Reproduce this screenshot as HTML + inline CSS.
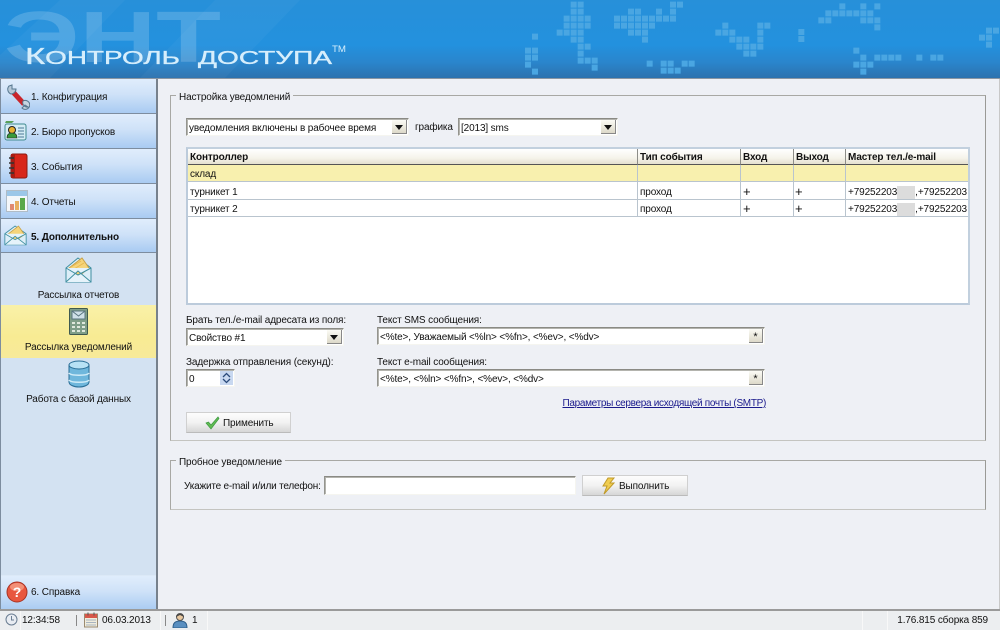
<!DOCTYPE html>
<html lang="ru"><head><meta charset="utf-8"><title>Контроль доступа</title>
<style>
html,body{margin:0;padding:0}
body{width:1000px;height:630px;position:relative;overflow:hidden;background:#eef0f5;font:10px/13px "Liberation Sans","DejaVu Sans",sans-serif;letter-spacing:-.13px;color:#111}
.a,.t{position:absolute}
.t{white-space:nowrap}
.nav{position:absolute;left:1px;width:155px;height:34px;background:linear-gradient(#e0edfc,#cfe2f8 45%,#a9cbf2);border-bottom:1px solid #7d8d9f}
.nav span{position:absolute;left:30px;top:12px;white-space:nowrap}
.nav svg{position:absolute}
.field{position:absolute;background:#fff;border-top:1px solid #8a8a84;border-left:1px solid #94948e;border-right:1px solid #f5f5f0;border-bottom:1px solid #f5f5f0;box-shadow:inset 1px 1px 0 #b4b4ae;box-sizing:border-box;white-space:nowrap;padding:2px 0 0 2px}
.dd{position:absolute;width:15px;top:1px;bottom:1px;right:1px;background:linear-gradient(#fbfbf5,#ddd9c9);border-right:1px solid #888;border-bottom:1px solid #888;box-sizing:border-box}
.dd:after{content:"";position:absolute;left:3px;top:5px;border:4px solid transparent;border-top:5px solid #111;border-bottom:0}
.star{position:absolute;width:14px;top:1px;bottom:1px;right:1px;background:linear-gradient(#fbfbf5,#ddd9c9);border-right:1px solid #888;border-bottom:1px solid #888;box-sizing:border-box;text-align:center;padding-top:2px;font-size:11px}
.group{position:absolute;border:1px solid #a8a8a4;border-right-color:#9a9a96;border-bottom-color:#c4c4c0;box-sizing:border-box}
.legend{position:absolute;background:#eef0f5;padding:0 3px;white-space:nowrap}
.btn{position:absolute;box-sizing:border-box;background:linear-gradient(#fdfdfd,#f2f2f2 50%,#d6d6d6);border:1px solid #d0d0d0;border-bottom-color:#bbb}
.btn span{position:absolute;white-space:nowrap;top:4px}
.cell{position:absolute;overflow:hidden;white-space:nowrap;box-sizing:border-box;padding-left:2px}
.h{font-weight:bold;height:16px;background:linear-gradient(#fff,#f5f3ea 60%,#e4e0d0);border-bottom:1px solid #555;border-right:1px solid #8d8d88;padding-top:2px}
.r{border-bottom:1px solid #b9c4ce;border-right:1px solid #b9c4ce;padding-top:3px}
.y{background:#f8f0ae}
.p{font-size:13px}
.blur{display:inline-block;width:18px;height:13px;background:#dcdcdc;vertical-align:top}
</style></head><body>

<!-- header -->
<div class="a" style="left:0;top:0;width:1000px;height:78px;background:linear-gradient(#2790d9,#2391de 58%,#2a85cc 80%,#2c72ae);overflow:hidden">
<svg class="a" style="left:0;top:0" width="1000" height="78" viewBox="0 0 1000 78">
<path d="M0 78 L0 55 L60 0 L125 0 L50 78Z M140 78 L215 0 L300 0 L225 78Z" fill="#fff" opacity=".035"/>
<text x="4" y="62" font-family="Liberation Sans" font-weight="bold" font-size="72" fill="#fff" opacity=".17" textLength="217" lengthAdjust="spacingAndGlyphs" letter-spacing="0">ЭНТ</text>
<text x="25" y="64" font-family="Liberation Sans" fill="#d6eefc" stroke="#d6eefc" stroke-width=".35" textLength="155" lengthAdjust="spacingAndGlyphs" font-size="23" letter-spacing="0">К<tspan font-size="18.500">ОНТРОЛЬ</tspan></text>
<text x="198" y="64" font-family="Liberation Sans" fill="#d6eefc" stroke="#d6eefc" stroke-width=".35" textLength="134" lengthAdjust="spacingAndGlyphs" font-size="18.500" letter-spacing="0">ДОСТУПА</text>
<text x="332" y="52" font-family="Liberation Sans" fill="#d6eefc" font-size="9" textLength="14" lengthAdjust="spacingAndGlyphs" letter-spacing="0">TM</text>
</svg>
<svg class="a" style="left:500px;top:0" width="500" height="78" viewBox="0 0 1500 234"><path fill="#4aa6e2" d="M212 5h18v18h-18zM233 5h18v18h-18zM212 26h18v18h-18zM233 26h18v18h-18zM191 47h18v18h-18zM212 47h18v18h-18zM233 47h18v18h-18zM254 47h18v18h-18zM191 68h18v18h-18zM212 68h18v18h-18zM233 68h18v18h-18zM254 68h18v18h-18zM170 89h18v18h-18zM191 89h18v18h-18zM212 89h18v18h-18zM233 89h18v18h-18zM212 110h18v18h-18zM233 110h18v18h-18zM233 131h18v18h-18zM254 131h18v18h-18zM233 152h18v18h-18zM233 173h18v18h-18zM254 173h18v18h-18zM275 173h18v18h-18zM275 194h18v18h-18zM96 101h18v18h-18zM75 143h18v18h-18zM96 143h18v18h-18zM75 164h18v18h-18zM96 164h18v18h-18zM75 185h18v18h-18zM96 206h18v18h-18zM510 5h18v18h-18zM531 5h18v18h-18zM384 26h18v18h-18zM405 26h18v18h-18zM468 26h18v18h-18zM510 26h18v18h-18zM342 47h18v18h-18zM363 47h18v18h-18zM384 47h18v18h-18zM405 47h18v18h-18zM426 47h18v18h-18zM447 47h18v18h-18zM468 47h18v18h-18zM489 47h18v18h-18zM510 47h18v18h-18zM342 68h18v18h-18zM363 68h18v18h-18zM384 68h18v18h-18zM405 68h18v18h-18zM426 68h18v18h-18zM447 68h18v18h-18zM384 89h18v18h-18zM405 89h18v18h-18zM426 89h18v18h-18zM426 110h18v18h-18zM667 68h18v18h-18zM772 68h18v18h-18zM793 68h18v18h-18zM646 89h18v18h-18zM667 89h18v18h-18zM688 89h18v18h-18zM772 89h18v18h-18zM688 110h18v18h-18zM709 110h18v18h-18zM730 110h18v18h-18zM772 110h18v18h-18zM709 131h18v18h-18zM730 131h18v18h-18zM751 131h18v18h-18zM772 131h18v18h-18zM730 152h18v18h-18zM751 152h18v18h-18zM895 87h18v18h-18zM895 108h18v18h-18zM1018 10h18v18h-18zM1081 10h18v18h-18zM1123 10h18v18h-18zM976 31h18v18h-18zM997 31h18v18h-18zM1018 31h18v18h-18zM1039 31h18v18h-18zM1060 31h18v18h-18zM1081 31h18v18h-18zM1102 31h18v18h-18zM955 52h18v18h-18zM976 52h18v18h-18zM1081 52h18v18h-18zM1102 52h18v18h-18zM1123 52h18v18h-18zM1123 73h18v18h-18zM1060 143h18v18h-18zM1081 164h18v18h-18zM1123 164h18v18h-18zM1144 164h18v18h-18zM1165 164h18v18h-18zM1186 164h18v18h-18zM1249 164h18v18h-18zM1291 164h18v18h-18zM1312 164h18v18h-18zM1060 185h18v18h-18zM1081 185h18v18h-18zM1102 185h18v18h-18zM1081 206h18v18h-18zM440 182h18v18h-18zM482 182h18v18h-18zM503 182h18v18h-18zM545 182h18v18h-18zM566 182h18v18h-18zM482 203h18v18h-18zM503 203h18v18h-18zM524 203h18v18h-18zM1458 83h18v18h-18zM1479 83h18v18h-18zM1437 104h18v18h-18zM1458 104h18v18h-18zM1458 125h18v18h-18z"/></svg>
</div>
<div class="a" style="left:0;top:78px;width:1000px;height:1px;background:#8b96a2"></div>

<!-- sidebar -->
<div class="a" style="left:0;top:79px;width:158px;height:531px;background:#d3e2f2;border-left:1px solid #7d8d9f;border-right:2px solid #77818c;box-sizing:border-box"></div>

<div class="nav" style="top:79px"><span>1. Конфигурация</span>
<svg style="left:5px;top:5px" width="24" height="26" viewBox="0 0 24 26"><path d="M7 8L18 20" stroke="#c9252b" stroke-width="5"/><path d="M3 2A5 5 0 0 0 5 10A5 5 0 0 0 10 5L6 5L6 1Z" fill="#b7c9d8" stroke="#56778f"/><path d="M17 17A4.500 4.500 0 1 1 16 24L19 21L22 23A4.500 4.500 0 0 1 17 17Z" fill="#c6d6e3" stroke="#56778f"/></svg></div>

<div class="nav" style="top:114px"><span>2. Бюро пропусков</span>
<svg style="left:3px;top:6px" width="23" height="22" viewBox="0 0 23 22"><path d="M1 3h7l2-2H2z" fill="#5aa05a"/><rect x="1" y="4" width="21" height="16" rx="2" fill="#d4ecf4" stroke="#3f8a8f"/><circle cx="8" cy="10" r="3.500" fill="#e8b030" stroke="#222"/><path d="M3 18c0-4 2-5 5-5s5 1 5 5z" fill="#3a9a3a" stroke="#222" stroke-width=".6"/><path d="M14 8h6M14 11h6M14 14h6M14 17h6" stroke="#7a9fb5" stroke-width="1.500"/></svg></div>

<div class="nav" style="top:149px"><span>3. События</span>
<svg style="left:7px;top:3px" width="20" height="28" viewBox="0 0 20 28"><rect x="3" y="2" width="16" height="24" rx="2" fill="#d8261a" stroke="#8a1a12"/><rect x="3" y="2" width="4" height="24" fill="#a81c12"/><path d="M1 6h5M1 11h5M1 16h5M1 21h5" stroke="#333" stroke-width="1.500"/></svg></div>

<div class="nav" style="top:184px"><span>4. Отчеты</span>
<svg style="left:5px;top:6px" width="22" height="22" viewBox="0 0 22 22"><rect x=".5" y=".5" width="21" height="21" fill="#f4f7fa" stroke="#b0bcc6"/><rect x="1" y="1" width="20" height="5" fill="#9cc7e8"/><rect x="4" y="14" width="4" height="6" fill="#e08a70"/><rect x="9" y="11" width="4" height="9" fill="#e8b060"/><rect x="14" y="8" width="5" height="12" fill="#5aa84a"/></svg></div>

<div class="nav" style="top:219px;font-weight:bold;height:33px"><span>5. Дополнительно</span>
<svg style="left:3px;top:3px" width="23" height="26" viewBox="0 0 27 27"><path d="M1 12L13 3 26 12V25H1Z" fill="#dceef8" stroke="#3f8fa0"/><path d="M4 13L17 3 24 13 14 20Z" fill="#f5d47a" stroke="#c7a24a"/><path d="M1 25L13 15 26 25M1 12L13 19 26 12" fill="#e6f3fa" stroke="#3f8fa0"/></svg></div>

<svg class="a" style="left:65px;top:256px" width="27" height="27" viewBox="0 0 27 27"><path d="M1 12L13 2 26 12V26H1Z" fill="#dceef8" stroke="#3f8fa0"/><path d="M4 12L17 2 24 12 14 20Z" fill="#f5d47a" stroke="#c7a24a"/><path d="M6 11L16 5M9 13L19 7" stroke="#e8b94f"/><path d="M1 26L13 15 26 26M1 12L13 19 26 12" fill="#e6f3fa" stroke="#3f8fa0"/></svg>
<div class="t" style="left:1px;width:155px;top:289px;text-align:center">Рассылка отчетов</div>

<div class="a" style="left:1px;top:305px;width:155px;height:53px;background:linear-gradient(#f9f1a8,#f8eb93 60%,#f7ea9a)"></div>
<svg class="a" style="left:69px;top:308px" width="20" height="27" viewBox="0 0 20 27"><rect x=".5" y=".5" width="18" height="26" rx="1" fill="#7f9e88" stroke="#3f5a50"/><rect x="3" y="3" width="13" height="8" fill="#cfe0e8" stroke="#5a7580"/><path d="M3 3L9.500 8 16 3" fill="none" stroke="#5a7580"/><path d="M3 14h3v2H3zM8 14h3v2H8zM13 14h3v2h-3zM3 18h3v2H3zM8 18h3v2H8zM13 18h3v2h-3zM3 22h3v2H3zM8 22h3v2H8zM13 22h3v2h-3z" fill="#dfe8dc"/></svg>
<div class="t" style="left:1px;width:155px;top:341px;text-align:center">Рассылка уведомлений</div>

<svg class="a" style="left:68px;top:360px" width="22" height="28" viewBox="0 0 22 28"><path d="M1 5V22C1 25 6 27 11 27S21 25 21 22V5Z" fill="#6fb7dc" stroke="#2a6e96"/><path d="M1 13C3 16 19 16 21 13M1 20C3 23 19 23 21 20" fill="none" stroke="#d0ecf8" stroke-width="1.500"/><ellipse cx="11" cy="5" rx="10" ry="4" fill="#b8e2f5" stroke="#2a6e96"/></svg>
<div class="t" style="left:1px;width:155px;top:393px;text-align:center">Работа с базой данных</div>

<div class="nav" style="top:575px;height:34px;border-bottom:0;border-top:1px solid #dce9f7"><span style="top:10px">6. Справка</span>
<svg style="left:5px;top:4px" width="22" height="24" viewBox="0 0 22 24"><circle cx="11" cy="12" r="10" fill="#e8573f" stroke="#a73324"/><ellipse cx="11" cy="7" rx="7" ry="4" fill="#f8a890" opacity=".7"/><text x="11" y="17" font-family="Liberation Sans" font-weight="bold" font-size="14" fill="#fff" text-anchor="middle">?</text></svg></div>

<!-- group 1 -->
<div class="group" style="left:170px;top:95px;width:816px;height:346px"></div>
<div class="legend" style="left:176px;top:92px;line-height:11px">Настройка уведомлений</div>

<div class="field" style="left:186px;top:118px;width:223px;height:18px;padding-top:3px">уведомления включены в рабочее время<div class="dd"></div></div>
<div class="t" style="left:415px;top:121px">графика</div>
<div class="field" style="left:458px;top:118px;width:160px;height:18px;padding-top:3px">[2013] sms<div class="dd"></div></div>

<!-- table -->
<div class="a" style="left:186px;top:147px;width:784px;height:158px;box-sizing:border-box;background:#fff;border:2px solid #bccbdb;border-top-color:#c2d0de;border-right-color:#c2d0de">
<div class="cell h" style="left:0;width:450px;top:0">Контроллер</div>
<div class="cell h" style="left:450px;width:103px;top:0">Тип события</div>
<div class="cell h" style="left:553px;width:53px;top:0">Вход</div>
<div class="cell h" style="left:606px;width:52px;top:0">Выход</div>
<div class="cell h" style="left:658px;width:122px;top:0;border-right:0">Мастер тел./e-mail</div>

<div class="cell r y" style="left:0;top:16px;width:450px;height:17px">склад</div>
<div class="cell r y" style="left:450px;top:16px;width:103px;height:17px"></div>
<div class="cell r y" style="left:553px;top:16px;width:53px;height:17px"></div>
<div class="cell r y" style="left:606px;top:16px;width:52px;height:17px"></div>
<div class="cell r y" style="left:658px;top:16px;width:122px;height:17px;border-right:0"></div>

<div class="cell r" style="left:0;top:33px;width:450px;height:18px;padding-top:4px">турникет 1</div>
<div class="cell r" style="left:450px;top:33px;width:103px;height:18px;padding-top:4px">проход</div>
<div class="cell r p" style="left:553px;top:33px;width:53px;height:18px;padding-top:3px">+</div>
<div class="cell r p" style="left:606px;top:33px;width:52px;height:18px;padding-top:3px;padding-left:1px">+</div>
<div class="cell r" style="left:658px;top:33px;width:122px;height:18px;padding-top:4px;border-right:0">+79252203<i class="blur"></i>,+79252203</div>

<div class="cell r" style="left:0;top:51px;width:450px;height:17px;padding-top:3px">турникет 2</div>
<div class="cell r" style="left:450px;top:51px;width:103px;height:17px;padding-top:3px">проход</div>
<div class="cell r p" style="left:553px;top:51px;width:53px;height:17px;padding-top:2px">+</div>
<div class="cell r p" style="left:606px;top:51px;width:52px;height:17px;padding-top:2px;padding-left:1px">+</div>
<div class="cell r" style="left:658px;top:51px;width:122px;height:17px;padding-top:3px;border-right:0">+79252203<i class="blur"></i>,+79252203</div>
</div>

<div class="t" style="left:186px;top:314px">Брать тел./e-mail адресата из поля:</div>
<div class="field" style="left:186px;top:328px;width:158px;height:18px;padding-top:3px">Свойство #1<div class="dd"></div></div>
<div class="t" style="left:186px;top:356px">Задержка отправления (секунд):</div>
<div class="field" style="left:186px;top:369px;width:49px;height:18px;padding-top:3px">0
<svg class="a" style="right:1px;top:1px" width="13" height="14" viewBox="0 0 13 14"><rect width="13" height="14" fill="#c8d8f0"/><path d="M3 6L6.500 2.500 10 6M3 8L6.500 11.500 10 8" fill="none" stroke="#2a4a7a" stroke-width="1.300"/></svg></div>

<div class="t" style="left:377px;top:314px">Текст SMS сообщения:</div>
<div class="field" style="left:377px;top:327px;width:388px;height:18px;padding-top:3px">&lt;%te&gt;, Уважаемый &lt;%ln&gt; &lt;%fn&gt;, &lt;%ev&gt;, &lt;%dv&gt;<div class="star">*</div></div>
<div class="t" style="left:377px;top:356px">Текст e-mail сообщения:</div>
<div class="field" style="left:377px;top:369px;width:388px;height:18px;padding-top:3px">&lt;%te&gt;, &lt;%ln&gt; &lt;%fn&gt;, &lt;%ev&gt;, &lt;%dv&gt;<div class="star">*</div></div>
<div class="t" style="right:234px;top:397px;color:#1a1a8c;text-decoration:underline;letter-spacing:-.31px">Параметры сервера исходящей почты (SMTP)</div>

<div class="btn" style="left:186px;top:412px;width:105px;height:21px">
<svg class="a" style="left:18px;top:3px" width="15" height="14" viewBox="0 0 15 14"><path d="M1 7L3.500 6 6 9 13 1 14 2.500 6 13Z" fill="#62bb52" stroke="#3a9a40" stroke-width=".7"/></svg>
<span style="left:36px">Применить</span></div>

<!-- group 2 -->
<div class="group" style="left:170px;top:460px;width:816px;height:50px"></div>
<div class="legend" style="left:176px;top:457px;line-height:11px">Пробное уведомление</div>
<div class="t" style="left:184px;top:480px;letter-spacing:-.2px">Укажите e-mail и/или телефон:</div>
<div class="field" style="left:324px;top:476px;width:252px;height:19px"></div>
<div class="btn" style="left:582px;top:475px;width:106px;height:21px">
<svg class="a" style="left:18px;top:1px" width="15" height="18" viewBox="0 0 15 18"><path d="M7 1L13 1 9 6 13 6 3 17 6 9 2 9Z" fill="#f0cd50" stroke="#c09a2a"/></svg>
<span style="left:36px">Выполнить</span></div>

<div class="a" style="left:999px;top:79px;width:1px;height:531px;background:#c8c8c8"></div>

<!-- status bar -->
<div class="a" style="left:0;top:609px;width:1000px;height:21px;background:#eceef0;border-top:2px solid #9a9a9a;box-sizing:border-box"></div>
<div class="a" style="left:862px;top:611px;width:1px;height:19px;background:#f8f8f8"></div>
<div class="a" style="left:887px;top:611px;width:1px;height:19px;background:#f8f8f8"></div>
<div class="a" style="left:20px;top:611px;width:1px;height:19px;background:#f8f8f8"></div>
<div class="a" style="left:160px;top:611px;width:1px;height:19px;background:#f8f8f8"></div>
<div class="a" style="left:207px;top:611px;width:1px;height:19px;background:#f8f8f8"></div>
<svg class="a" style="left:5px;top:612px" width="13" height="15" viewBox="0 0 13 15"><circle cx="6.500" cy="7.500" r="5.500" fill="#e8ecf2" stroke="#6a7d92"/><path d="M6.500 4V8H9" fill="none" stroke="#6a7d92"/></svg>
<div class="t" style="left:22px;top:614px">12:34:58</div>
<div class="a" style="left:76px;top:615px;width:1px;height:11px;background:#888"></div>
<svg class="a" style="left:84px;top:612px" width="14" height="16" viewBox="0 0 14 16"><rect x=".5" y="2" width="13" height="13" fill="#f0ecdc" stroke="#9a8a70"/><rect x="1" y="2" width="12" height="4" fill="#d8584a"/><path d="M2 8h10M2 10.500h10M2 13h10" stroke="#a8b4c0"/><path d="M4 .5v3M10 .5v3" stroke="#555"/></svg>
<div class="t" style="left:102px;top:614px">06.03.2013</div>
<div class="a" style="left:165px;top:615px;width:1px;height:11px;background:#888"></div>
<svg class="a" style="left:172px;top:612px" width="16" height="16" viewBox="0 0 16 16"><path d="M1 16C1 11 3 9 8 9S15 11 15 16Z" fill="#5a8fc0" stroke="#2f5f8a"/><circle cx="8" cy="5" r="3.500" fill="#e8c8a0" stroke="#555"/><path d="M4 5C4 1 12 1 12 5L8 3Z" fill="#444"/></svg>
<div class="t" style="left:192px;top:614px">1</div>
<div class="t" style="right:12px;top:614px">1.76.815 сборка 859</div>
</body></html>
